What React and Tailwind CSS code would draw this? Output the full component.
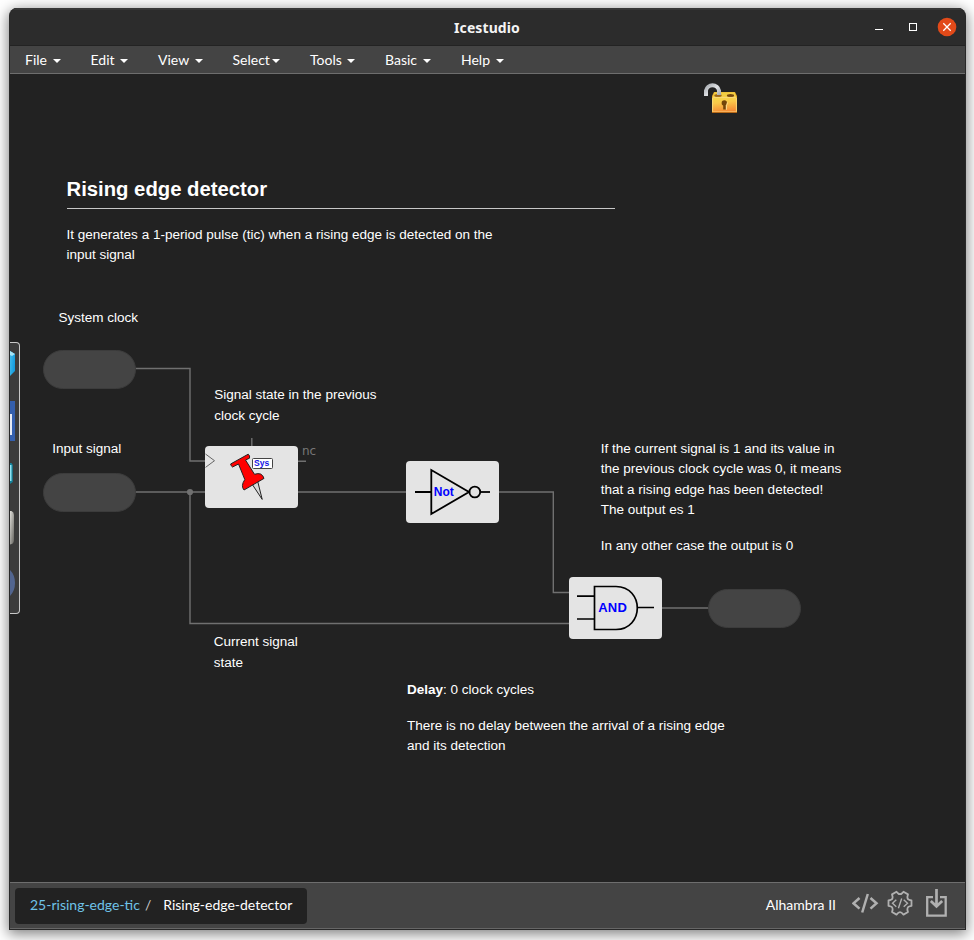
import React from "react";

const menus = [
  { label: "File", width: "w-[65.5px]", gap: "ml-[6px]" },
  { label: "Edit", width: "w-[67.5px]", gap: "ml-[5px]" },
  { label: "View", width: "w-[74.5px]", gap: "ml-[6px]" },
  { label: "Select", width: "w-[77.5px]", gap: "ml-[2px]" },
  { label: "Tools", width: "w-[75px]", gap: "ml-[5px]" },
  { label: "Basic", width: "w-[76px]", gap: "ml-[6px]" },
  { label: "Help", width: "w-[60px]", gap: "ml-[6px]" },
];

function TitleBar() {
  return (
    <header className="grid h-[38px] shrink-0 grid-cols-[1fr_auto_1fr] items-center border-t-2 border-b border-t-[#393939] border-b-[#232323] bg-[#2c2c2c] pr-[6px] pl-[5px]">
      <h1 className="col-start-2 pt-px font-['Noto_Sans',sans-serif] text-[14px] font-bold leading-5 tracking-[0.1px] text-[#f4f4f4]">Icestudio</h1>
      <svg className="mb-[2px] justify-self-end" width="86" height="22" viewBox="0 0 86 22">
        <path d="M2 13.5h8" stroke="#fff" />
        <rect x="36.5" y="7.5" width="7" height="7" fill="none" stroke="#fff" />
        <circle cx="74" cy="11" r="9.3" fill="#e24a19" />
        <path d="M70.3 7.3l7.4 7.4M77.7 7.3l-7.4 7.4" stroke="#fff" strokeWidth="1.3" />
      </svg>
    </header>
  );
}

function MenuBar() {
  return (
    <nav className="flex h-[28px] shrink-0 items-center border-b border-[#6e6e6e] bg-[#444] pl-[15px] text-[14px] leading-5 text-white">
      {menus.map((m) => (
        <div key={m.label} className={`flex shrink-0 items-center whitespace-nowrap ${m.width}`}>
          {m.label}
          <svg className={`mt-[2px] ${m.gap}`} width="8" height="4" viewBox="0 0 8 4">
            <path d="M0 0h8L4 4z" fill="#fff" />
          </svg>
        </div>
      ))}
    </nav>
  );
}

function Padlock() {
  return (
    <svg className="absolute top-[6px] left-[692px]" width="38" height="36" viewBox="702 80 38 36">
      <defs>
        <linearGradient id="gold" x1="0" y1="0" x2="0.2" y2="1">
          <stop offset="0" stopColor="#f5d747" />
          <stop offset="0.4" stopColor="#f9c94a" />
          <stop offset="1" stopColor="#f58e36" />
        </linearGradient>
        <linearGradient id="steel" x1="0" y1="0" x2="1" y2="1">
          <stop offset="0" stopColor="#a9adb2" />
          <stop offset="0.5" stopColor="#dfe1e4" />
          <stop offset="1" stopColor="#a2a7af" />
        </linearGradient>
      </defs>
      <path d="M714 92h21l2 4v16q0 1-1 1h-23q-1 0-1-1V96z" fill="#e2a526" />
      <path d="M714.5 92.3h20l1.8 4.6h-23.6z" fill="#f2cd42" />
      <ellipse cx="718" cy="95.5" rx="3.7" ry="1.5" fill="#9b671b" />
      <ellipse cx="730.5" cy="95.4" rx="3.6" ry="1.5" fill="#76470d" />
      <rect x="712.6" y="97.4" width="23.8" height="14.6" rx="0.8" fill="url(#gold)" stroke="#ffe38b" strokeWidth="0.8" />
      <path d="M712 112.5h25" stroke="#b96a18" />
      <path d="M706 96V90.5a6.6 6.4 0 0 1 13 0V95" fill="none" stroke="url(#steel)" strokeWidth="4" />
      <circle cx="724.3" cy="103" r="2.7" fill="#744509" />
      <path d="M723.2 104.5h2.8v5h-2.8z" fill="#744509" />
      <path d="M727.3 102.5q0 2-1 2.7v4.5" fill="none" stroke="#ffe29a" />
    </svg>
  );
}

function SideDock() {
  return (
    <aside className="absolute top-[268px] left-0 h-[272px] w-[10px] rounded-r-[4px] border border-l-0 border-[#c8c8c8] bg-[#3b3b3b]">
      <svg width="6" height="270" viewBox="10 343 6 270">
        <defs>
          <linearGradient id="ice" x1="0" y1="0" x2="1" y2="0.4">
            <stop offset="0" stopColor="#45bceb" />
            <stop offset="1" stopColor="#149bdc" />
          </linearGradient>
          <linearGradient id="grey" x1="0" y1="0" x2="1" y2="1">
            <stop offset="0" stopColor="#deddd8" />
            <stop offset="1" stopColor="#65645f" />
          </linearGradient>
        </defs>
        <path d="M10 351l5 3v17l-5 5z" fill="url(#ice)" />
        <path d="M10 351l5 3-3 2-2-1z" fill="#a7e5f7" />
        <rect x="10" y="401" width="5" height="40" fill="#345fad" />
        <path d="M10 414h2v21h-2z" fill="#e7eaf3" />
        <path d="M10 463h1.5l1.3 2v17l-2.8 2z" fill="#168199" />
        <path d="M10 465h1.5v16H10z" fill="#8fe3f2" />
        <path d="M10 511h1.5q2.5 1 2.5 4v25q0 4-4 4.500z" fill="url(#grey)" />
        <path d="M10 570q5 5 5 13t-5 13z" fill="#52658f" />
      </svg>
    </aside>
  );
}

function Wires() {
  return (
    <svg className="absolute inset-0" width="955" height="808" viewBox="10 74 955 808">
      <g fill="none" stroke="#707070" strokeWidth="1.4">
        <path d="M135 368.500H190V461H206" />
        <path d="M135 492H206M190 492V623.500H570" />
        <path d="M251.800 438v9M297 461.200h9" />
        <path d="M297 492H407M498 492H553.300V592.500H570M661 608H709" />
      </g>
      <circle cx="190" cy="492" r="3.100" fill="#707070" />
    </svg>
  );
}

const portBase = "absolute h-[39px] w-[93px] rounded-full border border-[#3c3c3c] bg-[#444]";
const blockBase = "absolute h-[62px] w-[93px] rounded-[4px] bg-[#e4e4e4]";

function RegisterBlock() {
  return (
    <div className={`${blockBase} top-[372px] left-[195px]`}>
      <svg width="93" height="62" viewBox="205 446 93 62">
        <path d="M205.500 454l9 6.700-9 6.700" fill="none" stroke="#666" />
        <path d="M252 484l10.200 15.400-5-20" fill="#d8d8d8" stroke="#222" strokeWidth="1" />
        <path d="M230.600 464L248.200 454.200Q250.300 455.600 249.500 458.200L245.500 460L254.500 474.300Q262 471.800 264 478.400L244 490Q240.500 486 244.800 479.500L238.500 464L232.500 467Q231 466.200 230.600 464Z" fill="#f00" stroke="#222" strokeWidth="1" />
        <rect x="252.500" y="458.500" width="20" height="10" rx="1" fill="#fff" stroke="#444" />
        <text x="254" y="466.300" fontFamily="Liberation Sans, sans-serif" fontSize="8.600" fontWeight="bold" fill="#1717e5">Sys</text>
      </svg>
    </div>
  );
}

function NotBlock() {
  return (
    <div className={`${blockBase} top-[387px] left-[396px]`}>
      <svg width="93" height="62" viewBox="406 461 93 62">
        <g fill="none" stroke="#000" strokeWidth="1.800">
          <path d="M415 492h16M431.300 470v44L469 492z" />
          <circle cx="474.800" cy="492" r="5.400" />
          <path d="M480 492h10" />
        </g>
        <text x="433.800" y="496.200" fontFamily="Liberation Sans, sans-serif" fontSize="12" fontWeight="bold" fill="#00f" textLength="20">Not</text>
      </svg>
    </div>
  );
}

function AndBlock() {
  return (
    <div className={`${blockBase} top-[503px] left-[559px]`}>
      <svg width="93" height="62" viewBox="569 577 93 62">
        <path d="M577 596.200h17.500M577 619h17.500M637.500 607.500H654M594.500 586.500v43H616C630 629.500 637.300 618.500 637.300 608S630 586.500 616 586.500z" fill="none" stroke="#000" strokeWidth="1.700" />
        <text x="598.300" y="612.300" fontFamily="Liberation Sans, sans-serif" fontSize="13" fontWeight="bold" fill="#00f" textLength="28.500">AND</text>
      </svg>
    </div>
  );
}

function Canvas() {
  return (
    <main className="relative min-h-0 flex-1 overflow-hidden bg-[#222] font-['Liberation_Sans',Arial,sans-serif] text-[13.53px] leading-[20.4px] whitespace-nowrap text-white">
      <Padlock />
      <section className="absolute top-[102px] left-[56.5px] w-[548.5px]">
        <h2 className="border-b border-[#c8c8c8] pb-[6px] text-[20.3px] leading-[26px] font-bold">Rising edge detector</h2>
        <p className="pt-[16px]">It generates a 1-period pulse (tic) when a rising edge is detected on the<br />input signal</p>
      </section>
      <Wires />
      <SideDock />
      <p className="absolute top-[234px] left-[48.500px]">System clock</p>
      <div className={`${portBase} top-[276px] left-[33px]`} />
      <p className="absolute top-[365px] left-[42.200px]">Input signal</p>
      <div className={`${portBase} top-[399px] left-[33px]`} />
      <p className="absolute top-[311px] left-[204.200px] leading-[20.6px]">Signal state in the previous<br />clock cycle</p>
      <RegisterBlock />
      <span className="absolute top-[367px] left-[292px] font-['DejaVu_Sans',sans-serif] text-[12px] leading-5 text-[#777]">nc</span>
      <NotBlock />
      <AndBlock />
      <div className={`${portBase} top-[515px] left-[698px]`} />
      <section className="absolute top-[365px] left-[590.800px]">
        <p>If the current signal is 1 and its value in<br />the previous clock cycle was 0, it means<br />that a rising edge has been detected!<br />The output es 1</p>
        <p className="pt-[15.4px]">In any other case the output is 0</p>
      </section>
      <p className="absolute top-[558px] left-[203.700px] leading-[20.6px]">Current signal<br />state</p>
      <section className="absolute top-[606px] left-[397px]">
        <p><strong>Delay</strong>: 0 clock cycles</p>
        <p className="pt-[15.6px]">There is no delay between the arrival of a rising edge<br />and its detection</p>
      </section>
    </main>
  );
}

function StatusIcons() {
  return (
    <svg className="shrink-0" width="96" height="30" viewBox="852 889 96 30" fill="none" stroke="#b0b0b0">
      <path d="M859.500 898l-6 5.300 6 5.300M870.500 898l6 5.300-6 5.300M867.800 894l-5.600 18.500" strokeWidth="2.500" />
      <path transform="translate(900 903.200)" d="M11.500-2.700V2.700Q8 3.200 7.600 4.600Q7 6 8 8.800L3.500 11.400Q1.500 9 0 9Q-1.500 9-3.500 11.400L-8 8.800Q-7 6-7.600 4.600Q-8 3.200-11.500 2.700V-2.700Q-8-3.200-7.600-4.600Q-7-6-8-8.800L-3.500-11.400Q-1.500-9 0-9Q1.500-9 3.500-11.400L8-8.800Q7-6 7.600-4.600Q8-3.200 11.500-2.700Z" strokeWidth="1.800" strokeLinejoin="round" />
      <path d="M896.300 899.800l-3.800 3.500 3.800 3.500M903.700 899.800l3.800 3.500-3.800 3.500M901.700 898.500l-3.300 9.800" strokeWidth="1.400" />
      <path d="M933 897.200h-5.800v18.500h18.500v-18.500H940" strokeWidth="2.300" />
      <path d="M936.500 889v16M930.800 901l5.700 5.300 5.700-5.300" strokeWidth="2.700" />
    </svg>
  );
}

function Footer() {
  return (
    <footer className="flex h-[47px] shrink-0 items-center border-t border-b border-t-[#6e6e6e] border-b-[#666] bg-[#444] pr-[17px] pl-[5px] text-[14px] leading-5 whitespace-nowrap text-white">
      <div className="flex h-[36px] w-[292px] items-center rounded-[4px] bg-[#222] pb-[2px] pl-[15px]">
        <span className="text-[#6fc3e8]">25-rising-edge-tic</span>
        <span className="ml-[5px] text-[#ccc]">/</span>
        <span className="ml-[12px]">Rising-edge-detector</span>
      </div>
      <span className="mr-[16px] ml-auto pb-[2px]">Alhambra II</span>
      <div className="pb-[4px]"><StatusIcons /></div>
    </footer>
  );
}

export default function App() {
  return (
    <div className="h-[940px] w-[974px] overflow-hidden bg-white pt-[8px] pl-[9px] font-['Lato',sans-serif]">
      <div className="flex h-[922px] w-[957px] flex-col overflow-hidden rounded-t-[8px] border-x border-b border-[#292929] bg-[#222] shadow-[0_3px_14px_1px_rgba(0,0,0,0.5)]">
        <TitleBar />
        <MenuBar />
        <Canvas />
        <Footer />
      </div>
    </div>
  );
}
